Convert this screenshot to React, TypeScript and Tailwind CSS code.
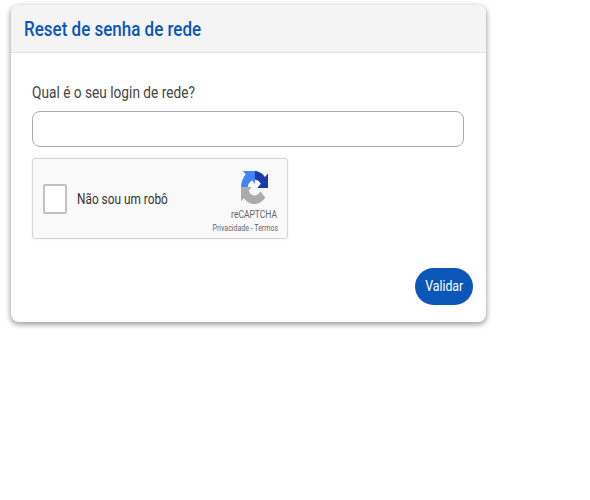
const roboto = { fontFamily: 'Roboto, sans-serif' }

function RecaptchaLogo() {
  return (
    <svg viewBox="0 0 64 64" preserveAspectRatio="none" className="h-[33px] w-[27px]">
      <path
        d="M64 31.955l-.033-1.37V4.687l-7.16 7.16C50.948 4.674 42.033.093 32.05.093c-10.4 0-19.622 4.96-25.458 12.64l11.736 11.86a15.55 15.55 0 0 1 4.754-5.334c2.05-1.6 4.952-2.906 8.968-2.906.485 0 .86.057 1.135.163 5.808.458 10.842 3.664 13.806 8.316l-8.307 8.307c10.522-.04 22.4-.066 27.94.001"
        fill="#1c3aa9"
      />
      <path
        d="M31.862.094l-1.37.033H4.594l7.16 7.16C4.58 13.147 0 22.06 0 32.046c0 10.4 4.96 19.622 12.64 25.458l11.86-11.736a15.55 15.55 0 0 1-5.334-4.754c-1.6-2.05-2.906-4.952-2.906-8.968 0-.485.057-.86.163-1.135.458-5.808 3.664-10.842 8.316-13.806l8.307 8.307c-.04-10.522-.066-22.4.001-27.94"
        fill="#4285f4"
      />
      <path
        d="M.001 32.045l.033 1.37v25.898l7.16-7.16c5.86 7.173 14.774 11.754 24.76 11.754 10.4 0 19.622-4.96 25.458-12.64L45.676 39.407a15.55 15.55 0 0 1-4.754 5.334c-2.05 1.6-4.952 2.906-8.968 2.906-.485 0-.86-.057-1.135-.163-5.808-.458-10.842-3.664-13.806-8.316l8.307-8.307c-10.522.04-22.4.066-27.94-.001"
        fill="#ababab"
      />
    </svg>
  )
}

export default function App() {
  return (
    <div className="min-h-[500px] bg-white pl-[11px] pt-[5px]" style={roboto}>
      <div className="w-[475px] overflow-hidden rounded-[8px] bg-white shadow-[0_2px_5px_1px_rgba(0,0,0,0.35)]">
        <div className="flex h-[48px] items-center border-b border-[#e3e3e3] bg-[#f4f4f4] pl-[13px]">
          <h1 className="origin-left scale-x-[0.85] whitespace-nowrap text-[20px] font-medium text-[#0b57b8]">
            Reset de senha de rede
          </h1>
        </div>
        <div className="px-[21px] pt-[29px]">
          <label className="block origin-left scale-x-[0.805] whitespace-nowrap text-[17px] leading-[20px] text-[#444]">
            Qual é o seu login de rede?
          </label>
          <input className="mt-[9px] block h-[36px] w-[432px] rounded-[8px] border border-[#aaa] bg-white" />
          <div className="mt-[11px] flex h-[81px] w-[256px] items-center justify-between rounded-[3px] border border-[#d6d6d6] bg-[#f9f9f9] pl-[10px] pr-[9px] shadow-[0_0_3px_rgba(0,0,0,0.08)]">
            <div className="flex items-center">
              <div className="h-[30px] w-[24px] rounded-[2px] border-2 border-[#c1c1c1] bg-white" />
              <span className="ml-[10px] mt-[1px] origin-left scale-x-[0.79] whitespace-nowrap text-[15px] text-[#333]">
                Não sou um robô
              </span>
            </div>
            <div className="flex flex-col items-end self-start pt-[12px]">
              <div className="mr-[10px]">
                <RecaptchaLogo />
              </div>
              <span className="mt-[4px] mr-[1px] origin-right scale-x-[0.85] text-[10px] leading-[14px] text-[#666]">
                reCAPTCHA
              </span>
              <span className="origin-right scale-x-[0.78] whitespace-nowrap text-[9px] leading-[12px] text-[#666]">
                Privacidade - Termos
              </span>
            </div>
          </div>
          <div className="mt-[29px] flex justify-end pb-[17px]">
            <button className="-mr-[8px] h-[37px] w-[58px] rounded-full bg-[#0b57b8] text-[15px] text-white">
              <span className="inline-block scale-x-[0.82]">Validar</span>
            </button>
          </div>
        </div>
      </div>
    </div>
  )
}
